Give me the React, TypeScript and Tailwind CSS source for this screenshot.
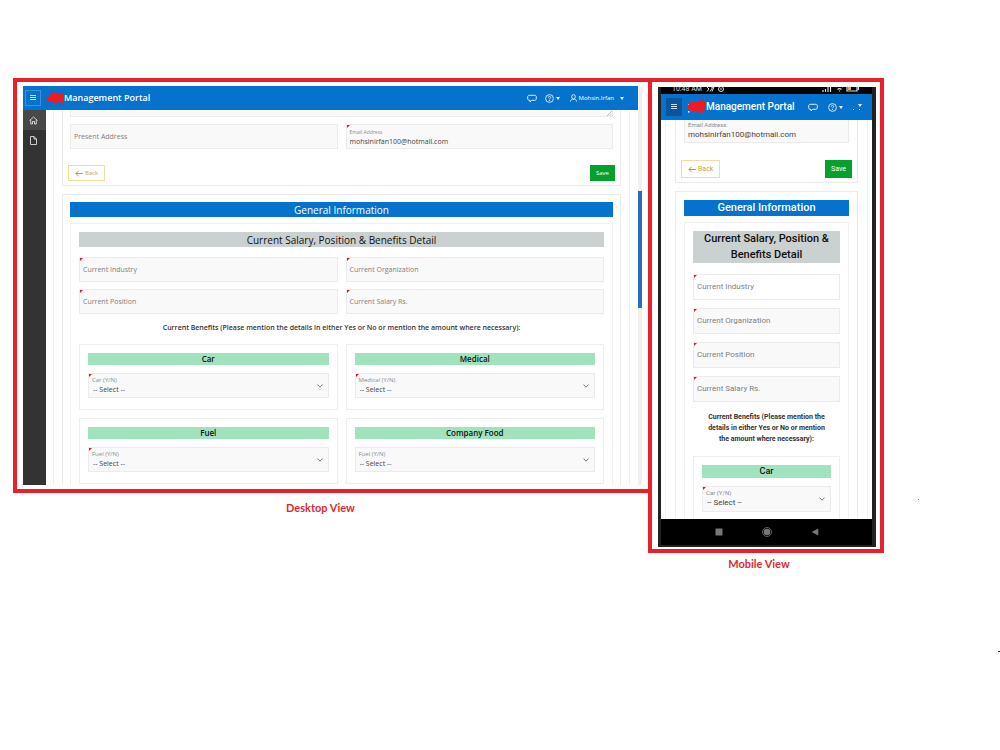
import React from "react";

type Size = "desktop" | "mobile";

function Corner() {
  return (
    <svg className="absolute top-0 left-0 size-[3px]" viewBox="0 0 3 3" aria-hidden="true">
      <path d="M0 0H3L0 3Z" fill="#e01b1b" />
    </svg>
  );
}

function MenuIcon() {
  return (
    <svg className="h-2 w-2" viewBox="0 0 8 8" fill="none" stroke="#fff" strokeWidth="0.8" aria-hidden="true">
      <path d="M1 1.500H7M1 3.500H7M1 5.500H7" />
    </svg>
  );
}

function ChatIcon() {
  return (
    <svg className="h-[9px] w-[10px]" viewBox="0 0 10 9" fill="none" stroke="#fff" strokeWidth="0.9" aria-hidden="true">
      <path d="M2.2 1.3H7.8C8.7 1.3 9.3 2 9.3 2.8V4.7C9.3 5.6 8.7 6.3 7.8 6.3H4.6L3 8V6.3H2.2C1.3 6.3 .7 5.600 .7 4.700V2.8C.7 2 1.3 1.3 2.2 1.3Z" />
    </svg>
  );
}

function HelpIcon() {
  return (
    <svg className="size-[9px]" viewBox="0 0 18 18" fill="none" stroke="#fff" strokeWidth="1.6" aria-hidden="true">
      <circle cx="9" cy="9" r="7.8" />
      <path d="M6.6 7.2C6.6 5.8 7.7 4.8 9 4.8S11.4 5.7 11.4 7C11.4 8.6 9 8.8 9 10.6" />
      <circle cx="9" cy="13" r=".6" fill="#fff" />
    </svg>
  );
}

function Caret() {
  return (
    <svg className="h-[3px] w-1" viewBox="0 0 4 3" aria-hidden="true">
      <path d="M0 0H4L2 3Z" fill="#fff" />
    </svg>
  );
}

function Chevron() {
  return (
    <svg
      className="pointer-events-none col-start-1 row-start-1 mr-[5px] h-1 w-1.5 self-center justify-self-end"
      viewBox="0 0 6 4"
      fill="none"
      stroke="#666"
      strokeWidth="0.9"
      aria-hidden="true"
    >
      <path d="M.5 .6L3 3.2L5.5 .6" />
    </svg>
  );
}

function BackIcon() {
  return (
    <svg className="h-[7px] w-2" viewBox="0 0 8 7" fill="none" stroke="#c8962e" strokeWidth="1" aria-hidden="true">
      <path d="M7.8 3.5H1M3.7 .7L.9 3.5L3.7 6.3" />
    </svg>
  );
}

function Field({ id, label, required = true, size, plain = false }: { id: string; label: string; required?: boolean; size: Size; plain?: boolean }) {
  return (
    <div
      className={
        "relative grid border border-[#ebebeb] " +
        (size === "desktop" ? "h-[25px] text-[7px] " : "h-[26px] text-[8px] ") +
        (plain ? "bg-white" : "bg-[#f9f9f9]")
      }
    >
      {required && <Corner />}
      <label htmlFor={id} className="pointer-events-none col-start-1 row-start-1 self-center pl-[3px] leading-[10px] text-[#7f7f7f]">
        {label}
      </label>
      <input id={id} className="col-start-1 row-start-1 w-full min-w-0 bg-transparent px-1 outline-none" />
    </div>
  );
}

function SelectField({ id, label, required = true, size }: { id: string; label: string; required?: boolean; size: Size }) {
  return (
    <div className={"relative grid border border-[#ebebeb] bg-[#f9f9f9] " + (size === "desktop" ? "h-[25px] text-[7px]" : "h-[26px] text-[8px]")}>
      {required && <Corner />}
      <div className="col-start-1 row-start-1 flex flex-col pt-0.5 pl-[3px]">
        <label htmlFor={id} className="text-[6px] leading-[8px] text-[#8c8c8c]">
          {label}
        </label>
        <select id={id} className="w-full appearance-none bg-transparent pl-px leading-[11px] text-[#444] outline-none">
          <option>-- Select --</option>
        </select>
      </div>
      <Chevron />
    </div>
  );
}

function Benefit({ id, title, label, required, size }: { id: string; title: string; label: string; required?: boolean; size: Size }) {
  return (
    <section className="border border-[#eeeeee] px-2 pt-2 pb-[11px]">
      <h4 className="mb-2 bg-[#a0e3bd] text-center text-[8px] leading-[12px] font-semibold text-[#111]">{title}</h4>
      <SelectField id={id} label={label} required={required} size={size} />
    </section>
  );
}

function Actions({ size }: { size: Size }) {
  const box = size === "desktop" ? "h-4 text-[6px] " : "h-[18px] text-[7px] ";
  return (
    <div className={"flex justify-between " + (size === "desktop" ? "-mx-0.5" : "-mx-[3px]")}>
      <button
        type="button"
        className={box + "flex items-center gap-0.5 border border-[#f3dc9c] bg-white px-1.5 text-[#c8a050]"}
      >
        <BackIcon />
        Back
      </button>
      <button type="button" className={box + "bg-[#06a02c] px-1.5 text-white"}>
        Save
      </button>
    </div>
  );
}

function DesktopPortal() {
  return (
    <div className="flex font-['Open_Sans',sans-serif]">
      <div className="min-w-0 flex-1">
        <header className="flex h-6 items-center bg-[#0572ce] pr-3.5 pl-0.5 text-white">
          <button type="button" aria-label="Menu" className="flex size-4 items-center justify-center border border-[#3d8fd6]">
            <MenuIcon />
          </button>
          <svg className="ml-[5px] h-3 w-[18px]" viewBox="0 0 18 12" aria-hidden="true">
            <path d="M0 7L3 4L2 3L6 2L9 0L12 1L17 2L18 5L17 11L12 10L9 12L6 9L1 9Z" fill="#ed1c24" />
          </svg>
          <h1 className="text-[9px] leading-[12px] font-semibold">Management Portal</h1>
          <nav className="ml-auto flex items-center text-[6px]">
            <button type="button" aria-label="Messages"><ChatIcon /></button>
            <button type="button" aria-label="Help" className="ml-2 flex items-center gap-0.5"><HelpIcon /><Caret /></button>
            <button type="button" className="ml-2.5 flex items-center gap-0.5 font-medium">
              <svg className="h-2 w-[7px]" viewBox="0 0 7 8" fill="none" stroke="#fff" strokeWidth="0.8" aria-hidden="true">
                <ellipse cx="3.5" cy="2.8" rx="1.8" ry="2.2" />
                <path d="M.5 7.6C.5 6 1.5 5.4 2.6 5L3.5 5.4L4.4 5C5.5 5.4 6.5 6 6.5 7.6" />
              </svg>
              Mohsin.Irfan
              <span className="ml-1"><Caret /></span>
            </button>
          </nav>
        </header>
        <div className="flex">
          <aside className="w-[23px] bg-[#333333]">
            <a href="#home" aria-label="Home" className="flex h-5 items-center justify-center bg-[#484848] pr-0.5">
              <svg className="size-[9px]" viewBox="0 0 18 18" fill="none" stroke="#e8e8e8" strokeWidth="1.7" aria-hidden="true">
                <path d="M1 9L9 2L17 9M3.5 8V16H7V11H11V16H14.5V8" />
              </svg>
            </a>
            <a href="#documents" aria-label="Documents" className="flex h-5 items-center justify-center pr-0.5">
              <svg className="h-[9px] w-[7px]" viewBox="0 0 14 18" fill="none" stroke="#e8e8e8" strokeWidth="1.7" aria-hidden="true">
                <path d="M1 1H8L13 6V17H1ZM8 1V6H13" />
              </svg>
            </a>
          </aside>
          <main className="mr-2 ml-[7px] min-w-0 flex-1 border-x border-[#efefef] px-2">
            <section className="mb-2 border-x border-b border-[#ebebeb] px-[7px] pb-1">
              <div className="relative">
                <textarea aria-label="Permanent Address" className="block h-[7px] min-h-0 w-full resize-none border border-t-0 border-[#ebebeb] bg-[#f9f9f9]" />
                <svg className="absolute right-px bottom-px size-[5px]" viewBox="0 0 5 5" stroke="#999" strokeWidth="0.6" aria-hidden="true">
                  <path d="M0 5L5 0M2.500 5L5 2.500" />
                </svg>
              </div>
              <div className="mt-[7px] mb-4 grid grid-cols-2 gap-2">
                <Field id="d-address" label="Present Address" required={false} size="desktop" />
                <div className="relative flex h-[25px] flex-col border border-[#ebebeb] bg-[#f9f9f9] pt-[3px] pl-[3px]">
                  <Corner />
                  <label htmlFor="d-email" className="text-[5px] leading-[8px] text-[#8c8c8c]">Email Address</label>
                  <input id="d-email" defaultValue="mohsinirfan100@hotmail.com" className="w-full bg-transparent text-[7px] leading-[11px] text-[#444] outline-none" />
                </div>
              </div>
              <Actions size="desktop" />
            </section>
            <section className="border-x border-t border-[#ebebeb] px-[7px] pt-[7px]">
              <h2 className="mb-1.5 bg-[#0572ce] pt-px text-center text-[10px] leading-[14px] font-medium text-white">General Information</h2>
              <div className="border-x border-t border-[#f0f0f0] px-2 pt-2 pb-px">
                <h3 className="mb-2.5 bg-[#cbd0d0] pt-px text-center text-[10px] leading-[14px] font-medium text-[#111]">
                  Current Salary, Position &amp; Benefits Detail
                </h3>
                <div className="grid grid-cols-2 gap-x-2 gap-y-[7px]">
                  <Field id="d-industry" label="Current Industry" size="desktop" />
                  <Field id="d-organization" label="Current Organization" size="desktop" />
                  <Field id="d-position" label="Current Position" size="desktop" />
                  <Field id="d-salary" label="Current Salary Rs." size="desktop" />
                </div>
                <p className="mt-[7px] mb-[9px] text-center text-[7px] leading-[14px] font-semibold text-[#333]">
                  Current Benefits (Please mention the details in either Yes or No or mention the amount where necessary):
                </p>
                <div className="grid grid-cols-2 gap-2">
                  <Benefit id="d-car" title="Car" label="Car (Y/N)" size="desktop" />
                  <Benefit id="d-medical" title="Medical" label="Medical (Y/N)" size="desktop" />
                  <Benefit id="d-fuel" title="Fuel" label="Fuel (Y/N)" size="desktop" />
                  <Benefit id="d-food" title="Company Food" label="Fuel (Y/N)" required={false} size="desktop" />
                </div>
              </div>
            </section>
          </main>
        </div>
      </div>
      <div className="w-1 bg-[#f0f0f0] pt-[105px]">
        <div className="h-[117px] bg-[#2a6ebb]" />
      </div>
    </div>
  );
}

function MobilePortal() {
  return (
    <div className="border-r-4 border-b-2 border-l-[3px] border-[#222] bg-white font-[Roboto,sans-serif]">
      <div className="flex h-[7px] items-start justify-between overflow-hidden bg-black pr-3 pl-[11px] text-[7px] leading-[5px] text-[#ddd]">
        <span className="flex items-start gap-1">
          10:48 AM
          <svg className="h-[5px] w-5" viewBox="0 1 20 5" fill="none" stroke="#ddd" strokeWidth="1" aria-hidden="true">
            <path d="M1 1L3 3L1 5.500M4 5.500L7 1M5 1H8L6 5.500" />
            <circle cx="15" cy="3" r="2.5" />
            <path d="M14 3H16" />
          </svg>
        </span>
        <svg className="h-[5px] w-[38px]" viewBox="0 2 38 5" fill="none" stroke="#ddd" strokeWidth="1.2" aria-hidden="true">
          <path d="M1 7V5M3.5 7V4M6 7V2M8.500 7V0M14 2Q17.500 -1 21 2M15.500 4.500Q17.500 2.500 19.500 4.500M17 6H18" />
          <path d="M25 0V6H35V0M36.500 2V5" />
          <path d="M26 3.500H29" stroke="#f5a623" strokeWidth="3" />
        </svg>
      </div>
      <header className="flex h-[26px] items-center bg-[#0572ce] pr-2.5 pl-[5px] text-white">
        <button type="button" aria-label="Menu" className="flex h-[18px] w-4 items-center justify-center bg-[#0a559c]">
          <MenuIcon />
        </button>
        <svg className="ml-1.5 h-[14px] w-[18px]" viewBox="0 0 18 14" aria-hidden="true">
          <path d="M0 11H1.500V12.500H0ZM0 4H1V5H0Z" fill="#fff" />
          <path d="M0 5L3 2L11 1L12 0L18 1L16 12L12 13L9 11L3 11L0 9Z" fill="#ed1c24" />
        </svg>
        <h1 className="text-[10px] leading-[14px] font-medium whitespace-nowrap">Management Portal</h1>
        <nav className="ml-auto flex items-center">
          <button type="button" aria-label="Messages"><ChatIcon /></button>
          <button type="button" aria-label="Help" className="ml-2.5 flex items-center gap-0.5"><HelpIcon /><Caret /></button>
          <button type="button" aria-label="Account" className="ml-2.5">
            <svg className="h-2 w-[9px]" viewBox="0 0 9 8" fill="#fff" aria-hidden="true">
              <path d="M5 1H9L7 4ZM0 6H1V7H0ZM6 6H7V7H6Z" />
            </svg>
          </button>
        </nav>
      </header>
      <main className="mx-1 border-x border-[#f3f3f3] px-[9px]">
        <section className="mb-2 border-x border-b border-[#ebebeb] px-2 pb-1">
          <div className="mb-[17px] flex flex-col border border-t-0 border-[#ebebeb] bg-[#f9f9f9] pb-0.5 pl-[3px]">
            <label htmlFor="m-email" className="text-[6px] leading-[9px] text-[#8c8c8c]">Email Address</label>
            <input id="m-email" defaultValue="mohsinirfan100@hotmail.com" className="h-[11px] w-full bg-transparent text-[8px] leading-[11px] text-[#444] outline-none" />
          </div>
          <Actions size="mobile" />
        </section>
        <section className="border-x border-t border-[#ebebeb] px-2 pt-2">
          <h2 className="mb-1.5 bg-[#0572ce] text-center text-[11px] leading-[16px] font-medium text-white">General Information</h2>
          <div className="border-x border-t border-[#f0f0f0] px-2 pt-2">
            <h3 className="mb-[11px] bg-[#cbd0d0] text-center text-[11px] leading-[16px] font-medium text-[#111]">
              Current Salary, Position &amp; Benefits Detail
            </h3>
            <div className="grid gap-2">
              <Field id="m-industry" label="Current Industry" size="mobile" plain />
              <Field id="m-organization" label="Current Organization" size="mobile" />
              <Field id="m-position" label="Current Position" size="mobile" />
              <Field id="m-salary" label="Current Salary Rs." size="mobile" />
            </div>
            <p className="mt-2.5 mb-[11px] px-2.5 text-center text-[7px] leading-[11px] font-bold text-[#333]">
              Current Benefits (Please mention the details in either Yes or No or mention the amount where necessary):
            </p>
            <div className="border-x border-t border-[#eeeeee] px-2 pt-2 pb-[7px]">
              <h4 className="mb-2 bg-[#a0e3bd] text-center text-[9px] leading-[13px] font-medium text-[#111]">Car</h4>
              <SelectField id="m-car" label="Car (Y/N)" size="mobile" />
            </div>
          </div>
        </section>
      </main>
      <footer className="flex h-[26px] items-center justify-center gap-[38px] bg-black">
        <button type="button" aria-label="Recent apps">
          <svg className="size-[10px]" viewBox="0 0 10 10" aria-hidden="true"><path d="M1.500 1.500H8.500V8.500H1.500Z" fill="#777" /></svg>
        </button>
        <button type="button" aria-label="Home">
          <svg className="size-[10px]" viewBox="0 0 10 10" aria-hidden="true">
            <circle cx="5" cy="5" r="4.500" fill="none" stroke="#777" strokeWidth="0.8" />
            <circle cx="5" cy="5" r="3.300" fill="#777" />
          </svg>
        </button>
        <button type="button" aria-label="Back">
          <svg className="size-[10px]" viewBox="0 0 10 10" aria-hidden="true"><path d="M8.300 1.500V8.500L1.700 5Z" fill="#777" /></svg>
        </button>
      </footer>
    </div>
  );
}

export default function App() {
  return (
    <div className="relative flex min-h-screen items-start bg-white pt-[78px] pr-[116px] pl-[13px]">
      <figure className="-mr-1 min-w-0 flex-1">
        <div className="border-4 border-[#e8202a] px-1.5 py-1">
          <DesktopPortal />
        </div>
        <figcaption className="mt-2 pr-6 text-center font-[Lato,sans-serif] text-[11px] leading-[14px] font-bold text-[#dc2a30]">
          Desktop View
        </figcaption>
      </figure>
      <figure className="w-[236px] shrink-0">
        <div className="border-4 border-[#e8202a] pt-[5px] pr-1 pb-0.5 pl-1.5">
          <MobilePortal />
        </div>
        <figcaption className="mt-1 pr-3.5 text-center font-[Lato,sans-serif] text-[11px] leading-[14px] font-bold text-[#dc2a30]">
          Mobile View
        </figcaption>
      </figure>
      <span className="absolute top-[499px] left-[918px] size-px bg-[#777]" />
      <span className="absolute top-[651px] right-0 h-px w-0.5 bg-[#222]" />
    </div>
  );
}
